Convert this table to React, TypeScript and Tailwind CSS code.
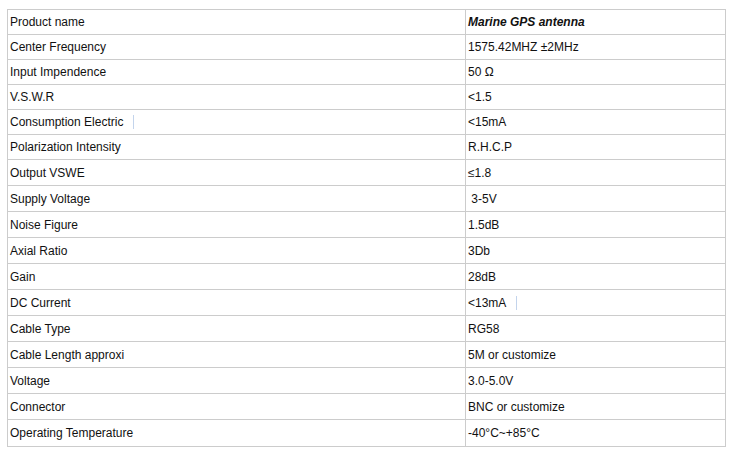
const rows: { name: string; value: string; h: string; nameMark?: boolean; valueMark?: boolean; strong?: boolean }[] = [
  { name: "Product name", value: "Marine GPS antenna", h: "h-[25px]", strong: true },
  { name: "Center Frequency", value: "1575.42MHZ ±2MHz", h: "h-[25px]" },
  { name: "Input Impendence", value: "50 Ω", h: "h-[25px]" },
  { name: "V.S.W.R", value: "<1.5", h: "h-[25px]" },
  { name: "Consumption Electric", value: "<15mA", h: "h-[25px]", nameMark: true },
  { name: "Polarization Intensity", value: "R.H.C.P", h: "h-[25px]" },
  { name: "Output VSWE", value: "≤1.8", h: "h-[26px]" },
  { name: "Supply Voltage", value: "\u00a03-5V", h: "h-[26px]" },
  { name: "Noise Figure", value: "1.5dB", h: "h-[26px]" },
  { name: "Axial Ratio", value: "3Db", h: "h-[26px]" },
  { name: "Gain", value: "28dB", h: "h-[26px]" },
  { name: "DC Current", value: "<13mA", h: "h-[26px]", valueMark: true },
  { name: "Cable Type", value: "RG58", h: "h-[26px]" },
  { name: "Cable Length approxi", value: "5M or customize", h: "h-[26px]" },
  { name: "Voltage", value: "3.0-5.0V", h: "h-[26px]" },
  { name: "Connector", value: "BNC or customize", h: "h-[26px]" },
  { name: "Operating Temperature", value: "-40°C~+85°C", h: "h-[26px]" },
];

function Mark() {
  return <span className="ml-[10px] inline-block h-[14px] w-px bg-[#c3d4ec] align-middle" />;
}

export default function App() {
  return (
    <div className="min-h-screen w-[735px] bg-white pl-[7px] pt-[9px] font-['Liberation_Sans',Arial,sans-serif] text-[12px] text-[#111]">
      <div className="w-[719px] border border-[#cccccc]">
        {rows.map((r, i) => (
          <div
            key={r.name}
            className={`flex ${r.h} ${i < rows.length - 1 ? "border-b border-[#cccccc]" : ""}`}
          >
            <div className="flex w-[458px] items-center border-r border-[#cccccc] pl-[2px]">
              <span>{r.name}</span>
              {r.nameMark && <Mark />}
            </div>
            <div className="flex flex-1 items-center pl-[2px]">
              <span className={r.strong ? "font-bold italic" : ""}>{r.value}</span>
              {r.valueMark && <Mark />}
            </div>
          </div>
        ))}
      </div>
    </div>
  );
}
